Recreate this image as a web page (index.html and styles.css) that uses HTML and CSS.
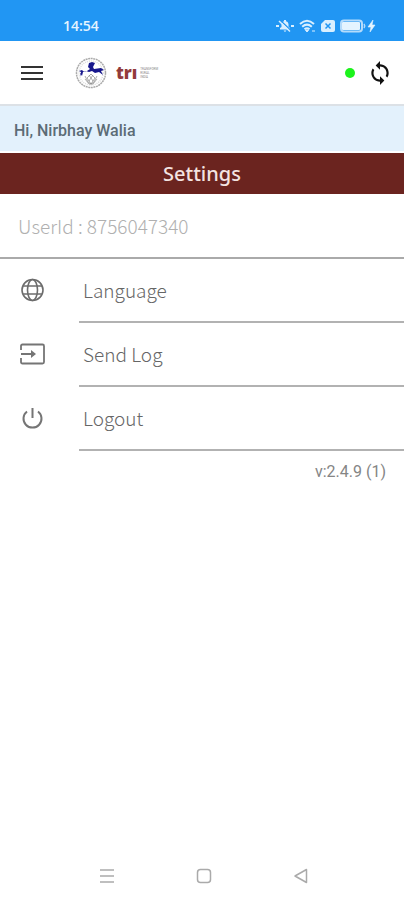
FILE: index.html
```html
<!DOCTYPE html>
<html lang="en">
<head>
<meta charset="utf-8">
<meta name="viewport" content="width=device-width, initial-scale=1">
<title>Settings</title>
<link rel="stylesheet" href="styles.css">
</head>
<body>
<div class="screen">
  <div class="status">
    <span class="clock">14:54</span>
    <div class="indicators">
      <svg width="18" height="14" viewBox="0 0 18 14" fill="#d9efff"><path d="M4 10.500V9L5.500 8V5Q6 2.500 8 2.300V1h2v1.300q2 .2 2.500 2.700v3L14 9v1.500zM7.500 11.500h3L9 13zM0 6h3v2H0zM15 6h3v2h-3z"/><path d="M5 2l9.500 9" stroke="#2196f3" stroke-width="1.200"/><path d="M3 2l11 10.500" stroke="#d9efff" stroke-width="1.500"/></svg>
      <svg width="17" height="14" viewBox="0 0 17 14" fill="none" stroke="#d9efff" stroke-width="2"><path d="M1 5q7-6.500 14 0M3.200 7.800q4.800-4.300 9.600 0M5.500 10.300q2.500-2.200 5 0"/><path d="M6.500 11h3L8 13zM13 12h3" fill="#d9efff" stroke-width="1"/></svg>
      <svg width="14" height="14" viewBox="0 0 14 14"><path d="M4 1h8q2 0 2 2v8q0 2-2 2H2q-2 0-2-2V5z" fill="#d9efff"/><path d="M4.500 4.500l5 5m0-5l-5 5" stroke="#2196f3" stroke-width="1.500"/></svg>
      <svg width="36" height="14" viewBox="0 0 36 14"><rect x="1" y="1.500" width="21" height="11" rx="3" fill="none" stroke="#b4dbfb" stroke-width="2"/><rect x="2" y="3" width="18" height="8" rx="1" fill="#e4f4ff"/><path d="M24 5q1.500 2 0 4" fill="none" stroke="#b4dbfb" stroke-width="1.500"/><path d="M33 1l-5 7h3l-1 5 5-7h-3z" fill="#e4f4ff" stroke="#e4f4ff" stroke-width=".6"/></svg>
    </div>
  </div>
  <header class="appbar">
    <button class="icon-button" aria-label="Menu"><svg width="22" height="16" viewBox="0 0 22 16" fill="#333"><path d="M0 1h22v2H0zM0 7h22v2H0zM0 13h22v2H0z"/></svg></button>
    <svg class="emblem" width="32" height="32" viewBox="0 0 32 32" role="img" aria-label="Emblem">
      <circle cx="16" cy="16" r="14.500" fill="#fff" stroke="#aaa" stroke-width="1.500" stroke-dasharray="2 .6"/>
      <circle cx="16" cy="16" r="12" fill="none" stroke="#ddd" stroke-width="1.500" stroke-dasharray="1 1"/>
      <path d="M5 20l1-5-2-1 3-1 2 2 3-1 3-2-2-2 1-4 3-1 3 1-2 4 1 2 7-1 3 2-3 1 2 4-4-3-4 1-3-2-3 1-3-1-3 1-1 4-2-3z" fill="#17178c"/>
      <path d="M16 17l4 4-4 6-4-6zM10 19l3 6 3 2 3-2 3-6M10 22l4 5h4l4-5M14 18l4 6m0-6l-4 6" fill="none" stroke="#8a8a8a" stroke-width=".7"/>
    </svg>
    <div class="brand"><span class="brand-name">trı</span><span class="brand-text">TRANSFORM<br>RURAL<br>INDIA</span></div>
    <span class="online"></span>
    <button class="icon-button" aria-label="Sync"><svg width="26" height="26" viewBox="0 0 24 24" fill="#111"><path d="M12 4V1L8 5l4 4V6c3.310 0 6 2.690 6 6 0 1.010-.25 1.970-.7 2.800l1.460 1.460C19.540 15.030 20 13.570 20 12c0-4.420-3.580-8-8-8zm0 14c-3.310 0-6-2.690-6-6 0-1.010.25-1.970.7-2.800L5.240 7.740C4.460 8.970 4 10.430 4 12c0 4.420 3.580 8 8 8v3l4-4-4-4v3z"/></svg></button>
  </header>
  <p class="greeting">Hi, Nirbhay Walia</p>
  <h1 class="title">Settings</h1>
  <main>
    <p class="user">UserId : 8756047340</p>
    <ul class="menu">
      <li><button class="item"><svg width="28" height="28" viewBox="0 0 28 28" fill="none" stroke="#6c6c6c" stroke-width="1.600"><circle cx="13.500" cy="14" r="10.500"/><ellipse cx="13.500" cy="14" rx="5" ry="10.500"/><path d="M4 10h19M4 18h19"/></svg><span class="label">Language</span></button></li>
      <li><button class="item"><svg width="28" height="28" viewBox="0 0 28 28" fill="none" stroke="#757575" stroke-width="1.800"><path d="M2 10V6q0-1.500 1.500-1.500h20Q25 4.500 25 6v16q0 1.500-1.500 1.500h-20Q2 23.500 2 22v-4M2 14h12"/><path d="M12 10l5 4-5 4z" fill="#757575" stroke="none"/></svg><span class="label">Send Log</span></button></li>
      <li><button class="item"><svg width="28" height="28" viewBox="0 0 28 28" fill="none" stroke="#757575" stroke-width="2"><path d="M13.500 4v10M8 7.500a9 9 0 1 0 11 0"/></svg><span class="label">Logout</span></button></li>
    </ul>
    <p class="version">v:2.4.9 (1)</p>
  </main>
  <nav class="system">
    <button class="icon-button" aria-label="Recent apps"><svg width="16" height="16" viewBox="0 0 16 16" stroke="#aaa" stroke-width="1.500"><path d="M1 2h14M1 8h14M1 14h14"/></svg></button>
    <button class="icon-button" aria-label="Home"><svg width="16" height="16" viewBox="0 0 16 16" fill="none" stroke="#aaa" stroke-width="1.500"><rect x="1.500" y="1.500" width="13" height="13" rx="3"/></svg></button>
    <button class="icon-button" aria-label="Back"><svg width="16" height="16" viewBox="0 0 16 16" fill="none" stroke="#aaa" stroke-width="1.500" stroke-linejoin="round"><path d="M13.500 1.500v13L2 8z"/></svg></button>
  </nav>
</div>
</body>
</html>
```
FILE: styles.css
```css
* { box-sizing: border-box; }
body, p, h1, ul { margin: 0; padding: 0; }
body { background: #fff; font-family: Roboto, sans-serif; }
svg { display: block; flex: none; }
button { border: 0; padding: 0; background: none; font: inherit; cursor: pointer; }
.screen { min-height: 100vh; display: flex; flex-direction: column; }
.status { display: flex; align-items: center; justify-content: space-between; padding: 14px 28px 4px 63px; height: 41px; background: #2196f3; }
.clock { font: 600 14px/20px "Open Sans", sans-serif; color: #e4f4ff; }
.indicators { display: flex; align-items: center; gap: 5px; }
.appbar { display: flex; align-items: center; height: 65px; padding: 0 11px 0 21px; border-bottom: 2px solid #dce1e6; }
.emblem { margin-left: 32px; }
.brand { display: flex; align-items: center; gap: 3px; margin: 0 auto 0 9px; }
.brand-name { font: 800 17px/20px "Open Sans", sans-serif; color: #923b3b; }
.brand-text { font: 3px/4px Roboto, sans-serif; color: #888; }
.online { width: 10px; height: 10px; border-radius: 50%; background: #1cf31c; margin-right: 12px; }
.greeting { padding: 14px 14px 10px; border-bottom: 2px solid #fff; background: #e3f1fc; color: #5c6c76; font-size: 16px; font-weight: 500; line-height: 21px; }
.title { background: #6b241f; color: #f3e3e1; text-align: center; font: 500 20px/41px "Noto Sans", sans-serif; }
.user { padding: 18px 18px 17px; border-bottom: 2px solid #aaa; color: #b0b0b0; font: 300 19px/28px "Noto Sans CJK SC", sans-serif; }
.menu { list-style: none; }
.item { display: flex; align-items: flex-start; width: 100%; gap: 32px; padding-left: 19px; text-align: left; }
.item svg { margin-top: 17px; }
.label { flex: 1; padding: 17px 4px; border-bottom: 2px solid #b2b2b2; color: #666; font: 300 19px/28px "Noto Sans CJK SC", sans-serif; }
.version { padding: 10px 18px; text-align: right; color: #858585; font-size: 16px; line-height: 22px; }
.system { display: flex; justify-content: center; gap: 81px; margin-top: auto; padding: 0 0 16px 4px; }
```
